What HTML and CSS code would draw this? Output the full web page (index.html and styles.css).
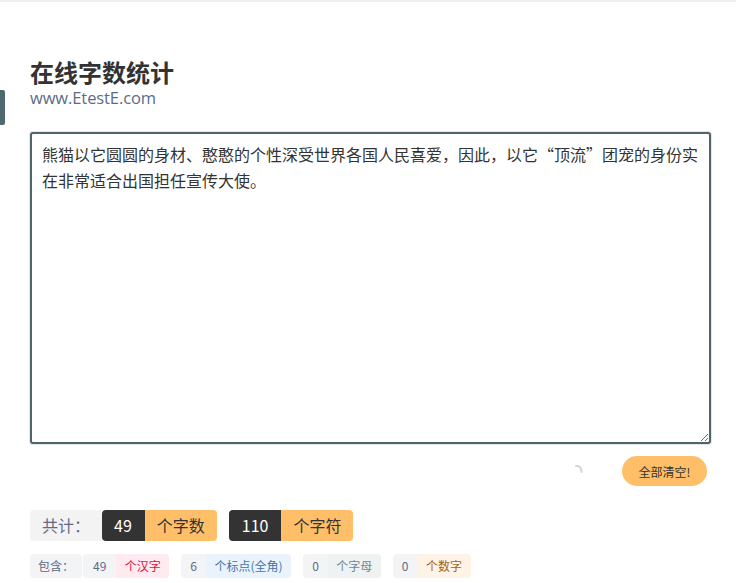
FILE: index.html
```
<!DOCTYPE html>
<html lang="zh-CN">
<head>
    <meta charset="UTF-8">
    <meta name="viewport" content="width=device-width, initial-scale=1.0">
    <title>在线字数统计</title>
    <link rel="stylesheet" href="styles.css">
</head>
<body>

<div class="top-line"></div>
<div class="side-tab"></div>

<div class="container">
    <div class="header">
        <h1>在线字数统计</h1>
        <div class="site">www.EtestE.com</div>
    </div>

    <textarea id="input">熊猫以它圆圆的身材、憨憨的个性深受世界各国人民喜爱，因此，以它“顶流”团宠的身份实在非常适合出国担任宣传大使。</textarea>

    <div class="actions">
        <svg class="spinner" width="14" height="14" viewBox="0 0 14 14">
            <path d="M6 2 A5 5 0 0 1 11.5 8" fill="none" stroke="#d4d4d4" stroke-width="2" stroke-linecap="round"/>
        </svg>
        <button class="clear-btn" onclick="clearText()">全部清空!</button>
    </div>

    <div class="totals">
        <span class="tag tag-title">共计：</span>
        <span class="group">
            <span class="tag tag-dark" id="word-count">49</span><span class="tag tag-orange">个字数</span>
        </span>
        <span class="group">
            <span class="tag tag-dark" id="char-count">110</span><span class="tag tag-orange">个字符</span>
        </span>
    </div>

    <div class="details">
        <span class="chip chip-title">包含：</span>
        <span class="group">
            <span class="chip chip-num" id="han-count">49</span><span class="chip chip-han">个汉字</span>
        </span>
        <span class="group">
            <span class="chip chip-num" id="punc-count">6</span><span class="chip chip-punc">个标点(全角)</span>
        </span>
        <span class="group">
            <span class="chip chip-num" id="letter-count">0</span><span class="chip chip-letter">个字母</span>
        </span>
        <span class="group">
            <span class="chip chip-num" id="digit-count">0</span><span class="chip chip-digit">个数字</span>
        </span>
    </div>
</div>

<script>
    const input = document.getElementById('input');

    function countText() {
        const text = input.value;
        const han = (text.match(/[\u4e00-\u9fa5]/g) || []).length;
        const punc = (text.match(/[\u3000-\u303f\uff00-\uffef\u2018-\u201d]/g) || []).length;
        const letters = (text.match(/[a-zA-Z]/g) || []).length;
        const digits = (text.match(/[0-9]/g) || []).length;
        document.getElementById('han-count').textContent = han;
        document.getElementById('punc-count').textContent = punc;
        document.getElementById('letter-count').textContent = letters;
        document.getElementById('digit-count').textContent = digits;
        document.getElementById('word-count').textContent = han + letters + digits;
        document.getElementById('char-count').textContent = new Blob([text]).size;
    }

    function clearText() {
        input.value = '';
        countText();
    }

    input.addEventListener('input', countText);
</script>

</body>
</html>
```

FILE: styles.css
```
body {
    font-family: "Noto Sans", "Noto Sans CJK SC", sans-serif;
    background-color: #ffffff;
    margin: 0;
    padding: 0;
    color: #333;
}
.top-line {
    height: 2px;
    background-color: #efefef;
}
.side-tab {
    position: absolute;
    left: 0;
    top: 90px;
    width: 5px;
    height: 35px;
    background-color: #4f6a6f;
    border-radius: 0 2px 2px 0;
}
.container {
    padding: 0 25px 0 30px;
}
.header {
    padding-top: 55px;
    margin-bottom: 25px;
}
h1 {
    font-family: "Noto Sans CJK SC", sans-serif;
    font-size: 24px;
    font-weight: bold;
    line-height: 30px;
    margin: 0;
    color: #333;
}
.site {
    font-family: "Open Sans", "Noto Sans", sans-serif;
    font-size: 16.5px;
    line-height: 18px;
    margin-top: 2px;
    color: #5d6b88;
    letter-spacing: -0.1px;
}
textarea {
    display: block;
    box-sizing: border-box;
    width: 100%;
    height: 312px;
    margin: 0;
    padding: 7px 10px;
    font-family: "Noto Sans CJK SC", sans-serif;
    font-size: 16px;
    line-height: 26px;
    color: #333;
    border: 2px solid #4f6569;
    border-radius: 3px;
    box-shadow: 0 0 0 1px #e2e6e7;
    outline: none;
    resize: vertical;
}
.actions {
    display: flex;
    justify-content: flex-end;
    align-items: center;
    gap: 38px;
    padding: 12px 4px 0 0;
}
.spinner {
    display: block;
}
.clear-btn {
    font-family: "Noto Sans CJK SC", sans-serif;
    font-size: 12px;
    color: #333;
    background-color: #ffbf69;
    border: none;
    border-radius: 15px;
    height: 30px;
    width: 85px;
    padding: 0;
    cursor: pointer;
}
.totals {
    display: flex;
    gap: 12px;
    margin-top: 24px;
}
.group {
    display: flex;
}
.tag {
    font-family: "Noto Sans CJK SC", sans-serif;
    font-size: 16px;
    line-height: 31px;
    height: 31px;
    padding: 0 12px;
}
.tag-title {
    background-color: #f3f3f4;
    color: #5d6b88;
    border-radius: 4px 0 0 4px;
    margin-right: -12px;
}
.tag-dark {
    background-color: #333;
    color: #fff;
    border-radius: 4px 0 0 4px;
    padding: 0 13px 0 12px;
}
.tag-orange {
    background-color: #ffbf69;
    color: #333;
    border-radius: 0 4px 4px 0;
}
#char-count {
    padding: 0 13px;
}
.details {
    display: flex;
    gap: 12px;
    margin-top: 13px;
}
.details .chip-title {
    margin-right: -11px;
}
.chip {
    font-family: "Noto Sans CJK SC", sans-serif;
    font-size: 12px;
    line-height: 24px;
    height: 24px;
    padding: 0 8px;
}
.chip-title {
    background-color: #f3f4f5;
    color: #5d6b88;
    border-radius: 4px;
    padding: 0 8px;
}
.chip-num {
    background-color: #f3f4f5;
    color: #5d6b88;
    border-radius: 4px 0 0 4px;
    padding: 0 10px;
}
#punc-count,
#letter-count,
#digit-count {
    padding: 0 9px;
}
.chip-han,
.chip-punc,
.chip-letter,
.chip-digit {
    border-radius: 0 4px 4px 0;
    padding: 0 8.5px;
}
.chip-han {
    background-color: #ffebef;
    color: #d6163f;
}
.chip-punc {
    background-color: #eaf3fb;
    color: #3a77ab;
}
.chip-letter {
    background-color: #eef2f3;
    color: #6a8a90;
}
.chip-digit {
    background-color: #fff3e5;
    color: #a2631b;
}
```
